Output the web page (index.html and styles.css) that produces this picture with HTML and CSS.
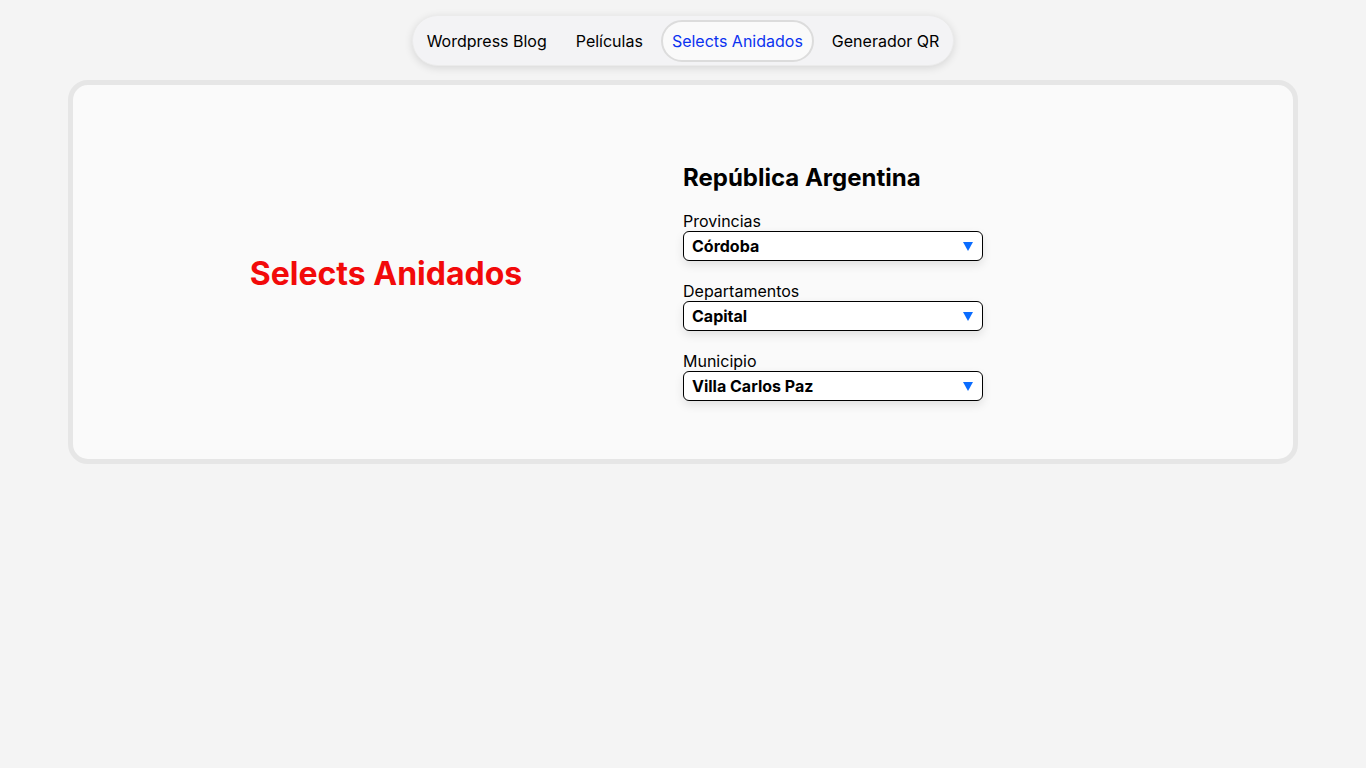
FILE: index.html
```html
<!DOCTYPE html>
<html lang="es">
<head>
<meta charset="utf-8">
<title>Selects Anidados</title>
<link rel="stylesheet" href="styles.css">
</head>
<body>
<header class="topbar">
  <nav class="nav">
    <a class="nav-item first" href="#">Wordpress Blog</a>
    <a class="nav-item" href="#">Películas</a>
    <a class="nav-item active" href="#">Selects Anidados</a>
    <a class="nav-item" href="#">Generador QR</a>
  </nav>
</header>
<main class="card">
  <section class="left">
    <h1 class="title">Selects Anidados</h1>
  </section>
  <section class="right">
    <h2 class="country">República Argentina</h2>
    <div class="field">
      <label class="label">Provincias</label>
      <div class="select-wrap">
        <select class="select"><option>Córdoba</option></select>
      </div>
    </div>
    <div class="field">
      <label class="label">Departamentos</label>
      <div class="select-wrap">
        <select class="select"><option>Capital</option></select>
      </div>
    </div>
    <div class="field">
      <label class="label">Municipio</label>
      <div class="select-wrap">
        <select class="select"><option>Villa Carlos Paz</option></select>
      </div>
    </div>
  </section>
</main>
</body>
</html>
```
FILE: styles.css
```css
* { box-sizing: border-box; }
html, body { margin: 0; padding: 0; }
body {
  background: #f4f4f4;
  font-family: Inter, "Noto Sans", sans-serif;
  color: #000;
}
.topbar {
  display: flex;
  justify-content: center;
  padding-top: 15px;
}
.nav {
  display: flex;
  align-items: center;
  gap: 18px;
  height: 51px;
  padding: 0 14px;
  background: #f3f3f5;
  border: 1px solid #ebebeb;
  border-radius: 26px;
  box-shadow: 0 2px 8px rgba(0,0,0,0.12);
}
.nav-item {
  display: block;
  font-size: 16px;
  color: #000;
  text-decoration: none;
  padding: 9px 0;
  line-height: 20px;
  border: 2px solid transparent;
  border-radius: 21px;
  border-left-width: 0;
  border-right-width: 0;
}
.nav-item.first { margin-right: 11px; }
.nav-item.active {
  color: #0a32f0;
  background: #fafafa;
  border: 2px solid #dcdcdc;
  padding: 9px 9px;
}

.card {
  margin: 14px 68px 0;
  height: 384px;
  background: #fafafa;
  border: 5px solid #e6e6e6;
  border-radius: 20px;
  display: grid;
  grid-template-columns: 1fr 1fr;
}
.left {
  display: flex;
  align-items: center;
  justify-content: center;
  padding-left: 16px;
  padding-top: 2px;
}
.title {
  margin: 0;
  color: #f20a0a;
  font-size: 32px;
  font-weight: 700;
  letter-spacing: 0;
}
.right {
  padding-top: 79px;
}
.country {
  margin: 0 0 19px;
  font-size: 24px;
  font-weight: 700;
  line-height: 28px;
}
.field {
  display: flex;
  flex-direction: column;
  margin-bottom: 20px;
}
.label {
  font-size: 16px;
  line-height: 20px;
}
.select-wrap {
  position: relative;
  width: 300px;
}
.select {
  appearance: none;
  -webkit-appearance: none;
  width: 300px;
  height: 30px;
  border: 1px solid #000;
  border-radius: 6px;
  background: #fff;
  font-family: Inter, "Noto Sans", sans-serif;
  font-size: 16px;
  font-weight: 700;
  color: #000;
  padding: 0 8px;
  box-shadow: 0 4px 10px rgba(0,0,0,0.1);
}
.select-wrap::after {
  content: "";
  position: absolute;
  right: 10px;
  top: 11px;
  width: 0;
  height: 0;
  border-left: 5px solid transparent;
  border-right: 5px solid transparent;
  border-top: 9px solid #0a6cff;
  pointer-events: none;
}
```
